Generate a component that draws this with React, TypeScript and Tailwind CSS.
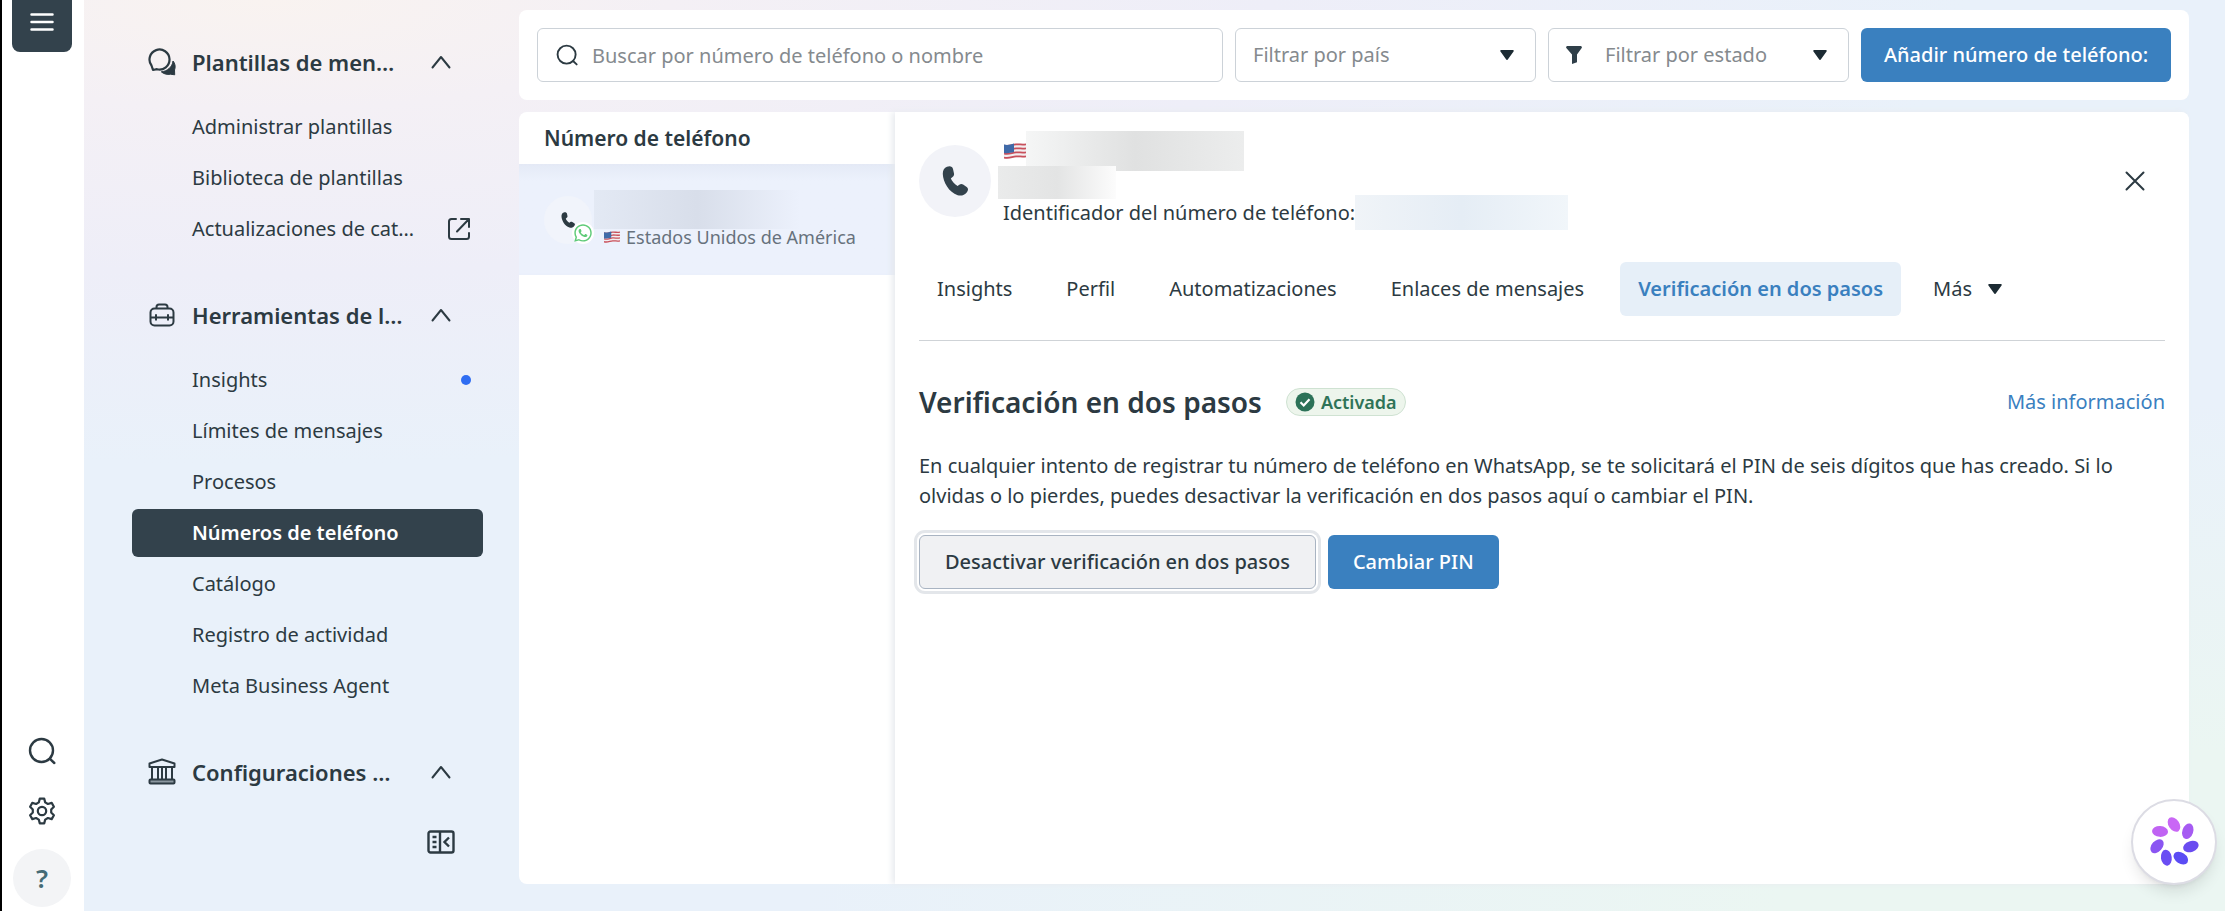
import type { ReactNode } from "react";
import { FaWhatsapp } from "react-icons/fa";

type Item = { label: string; dot?: boolean; external?: boolean; active?: boolean };
type Group = { title: string; icon: ReactNode; items: Item[] };

const GROUPS: Group[] = [
  {
    title: "Plantillas de men…",
    icon: <ChatIcon />,
    items: [
      { label: "Administrar plantillas" },
      { label: "Biblioteca de plantillas" },
      { label: "Actualizaciones de cat…", external: true },
    ],
  },
  {
    title: "Herramientas de l…",
    icon: <ToolboxIcon />,
    items: [
      { label: "Insights", dot: true },
      { label: "Límites de mensajes" },
      { label: "Procesos" },
      { label: "Números de teléfono", active: true },
      { label: "Catálogo" },
      { label: "Registro de actividad" },
      { label: "Meta Business Agent" },
    ],
  },
  { title: "Configuraciones …", icon: <BankIcon />, items: [] },
];

const TABS = ["Insights", "Perfil", "Automatizaciones", "Enlaces de mensajes", "Verificación en dos pasos"];
const ACTIVE_TAB = "Verificación en dos pasos";

function ChatIcon() {
  return (
    <svg viewBox="0 0 28 28" className="size-7" fill="none">
      <path
        d="M3.500 17.500A10 10 0 1 1 9 21.200L5 22z"
        stroke="currentColor"
        strokeWidth="2.200"
        strokeLinejoin="round"
      />
      <path
        d="M25 13c2.200 2.600 2.800 6 1.500 9l.2 4.800-4.200-.6c-3.400.6-6.800-.2-9.200-2.400C19 23.500 24.500 19 25 13z"
        fill="currentColor"
        stroke="currentColor"
        strokeLinejoin="round"
      />
    </svg>
  );
}

function ToolboxIcon() {
  return (
    <svg viewBox="0 0 28 28" className="size-7" fill="none" stroke="currentColor" strokeWidth="2">
      <rect x="2.500" y="7.500" width="23" height="17" rx="4" />
      <path d="M8.500 7.500V6a2.500 2.500 0 0 1 2.500-2.500h6A2.500 2.500 0 0 1 19.500 6v1.500M2.500 16.500h23M8 13.200v6.300M20 13.200v6.300" />
    </svg>
  );
}

function BankIcon() {
  return (
    <svg viewBox="0 0 28 28" className="size-7" fill="none" stroke="currentColor" strokeWidth="2" strokeLinejoin="round">
      <path d="M14 1.500 26.500 5.500V9H1.500V5.500z" />
      <path d="M4 9.500v12M10 9.500v12M14 9.500v12M18 9.500v12M24 9.500v12" />
      <rect x="1.500" y="21.500" width="25" height="4" rx="1" fill="#8b979f" />
    </svg>
  );
}

function SearchIcon({ className }: { className: string }) {
  return (
    <svg viewBox="0 0 28 28" className={className} fill="none" stroke="currentColor" strokeWidth="2.400" strokeLinecap="round">
      <circle cx="13.500" cy="13.500" r="11.500" />
      <path d="m21.700 21.700 4.600 4.300" />
    </svg>
  );
}

function GearIcon() {
  return (
    <svg viewBox="0 0 28 28" className="size-7" fill="none" stroke="currentColor" strokeWidth="2.200" strokeLinejoin="round">
      <path d="M11.800 1.600h4.400l1 3.800 2.700 1.600 3.800-1.100 2.200 3.800-2.700 2.800v3l2.700 2.800-2.200 3.800-3.800-1.100-2.700 1.600-1 3.800h-4.400l-1-3.800L8.100 21l-3.800 1.100-2.200-3.800 2.700-2.800v-3L2.100 9.700l2.200-3.800L8.100 7l2.700-1.600z" />
      <circle cx="14" cy="14" r="4.200" />
    </svg>
  );
}

function PhoneIcon({ className }: { className: string }) {
  return (
    <svg viewBox="0 0 26 30" className={className}>
      <path
        d="M5 .8C8-.4 10.500.6 11 3l1 4.500c.3 1.500-.3 2.800-1.500 3.500l-1.700 1.500c1.500 3.200 3.800 5.800 6.800 7.500l1.700-1.200c1.200-.9 2.600-1 3.800-.2l3.600 2.400c1.700 1.200 1.700 3.400.2 5.200-2.300 2.800-5.500 4-9.200 3C7 26.500 1 16 .8 8 .7 4.500 2.200 1.800 5 .8z"
        fill="currentColor"
      />
    </svg>
  );
}

function ChevronUp() {
  return (
    <svg viewBox="0 0 20 14" className="h-3.5 w-5" fill="none" stroke="currentColor" strokeWidth="2" strokeLinecap="round" strokeLinejoin="round">
      <path d="m1.500 12.500 8.500-10.500 8.500 10.500" />
    </svg>
  );
}

function ExternalIcon() {
  return (
    <svg viewBox="0 0 24 24" className="size-6" fill="none" stroke="currentColor" strokeWidth="2" strokeLinecap="round" strokeLinejoin="round">
      <path d="M9 2H4.500A2.500 2.500 0 0 0 2 4.500v15A2.500 2.500 0 0 0 4.500 22h15a2.500 2.500 0 0 0 2.500-2.500V16M14 2h8v8M22 2 10 14.500" />
    </svg>
  );
}

function CollapseIcon() {
  return (
    <svg viewBox="0 0 28 24" className="h-6 w-7" fill="none" stroke="currentColor" strokeWidth="2.400">
      <rect x="1.500" y="1.500" width="25" height="21" rx="2" />
      <path d="M13 1.500v21" />
      <path d="M5.500 7h4M5.500 12h4M5.500 17h4" />
      <path d="m22 7.500-4.500 4.500 4.500 4.500" />
    </svg>
  );
}

function Caret() {
  return (
    <svg viewBox="0 0 14 10" className="h-2.5 w-3.5 text-[#1c2b33]">
      <path d="M1 0h12a.8.8 0 0 1 .7 1.200L7.800 9.500a1 1 0 0 1-1.600 0L.3 1.200A.8.800 0 0 1 1 0z" fill="currentColor" />
    </svg>
  );
}

function Flag({ className }: { className: string }) {
  return (
    <svg viewBox="0 0 22 16" className={className}>
      <path d="M0 1.500C5 3 8 .5 12 .3s6 .8 10 0v14.200c-4 1-6-.2-10 0S5 17 0 15.500z" fill="#f3eef0" />
      <path
        d="M0 2.500c5 1.500 8-1 12-1.200s6 .8 10 0M0 6.500c5 1.500 8-1 12-1.200s6 .8 10 0M0 10.500c5 1.500 8-1 12-1.200s6 .8 10 0M0 14.500c5 1.500 8-1 12-1.200s6 .8 10 0"
        fill="none"
        stroke="#c8505c"
        strokeWidth="1.800"
      />
      <path d="M0 1.500c4 1.200 7-.3 10-1v8.500c-3 .8-6 1.600-10 1z" fill="#3f6aa8" />
    </svg>
  );
}

const PETALS = [
  { a: 0, c: "#c967f5" },
  { a: 52, c: "#a65bf2" },
  { a: 105, c: "#6a4cf0" },
  { a: 157, c: "#5b4cf4" },
  { a: 206, c: "#6a4df3" },
  { a: 256, c: "#8a55f2" },
  { a: 307, c: "#c063f3" },
];

function Assistant() {
  return (
    <svg viewBox="-28 -28 56 56" className="size-14">
      {PETALS.map((p) => (
        <g key={p.a} transform={`rotate(${p.a})`}>
          <ellipse cx="0" cy="-17.500" rx="5.400" ry="8" fill={p.c} transform="rotate(-34 0 -17.500)" />
        </g>
      ))}
    </svg>
  );
}

function Rail() {
  return (
    <nav className="flex w-[84px] shrink-0 flex-col items-center justify-between border-l-2 border-black bg-white pr-0.5 pb-1 text-[#2c3a42]">
      <button
        type="button"
        aria-label="Menú"
        className="flex h-[52px] w-[60px] items-start justify-center rounded-b-lg bg-[#33424c] pt-3 text-white"
      >
        <svg viewBox="0 0 24 20" className="h-5 w-6" stroke="currentColor" strokeWidth="2.500" strokeLinecap="round">
          <path d="M1.500 2.500h21M1.500 10h21M1.500 17.500h21" />
        </svg>
      </button>
      <div className="flex flex-col items-center">
        <button type="button" aria-label="Buscar" className="mb-8">
          <SearchIcon className="size-7" />
        </button>
        <button type="button" aria-label="Configuración" className="mb-6">
          <GearIcon />
        </button>
        <button
          type="button"
          aria-label="Ayuda"
          className="size-[58px] rounded-full bg-[#f3f4f6] text-[26px] font-semibold text-[#456b75]"
        >
          ?
        </button>
      </div>
    </nav>
  );
}

function Sidebar() {
  return (
    <aside className="flex w-[435px] shrink-0 flex-col pr-9 pl-12 pt-9">
      {GROUPS.map((g) => (
        <section key={g.title} className="mb-9 last-of-type:mb-5">
          <button type="button" className="mb-[15px] flex h-[52px] w-full items-center pr-8 pl-4 text-left last:mb-0">
            {g.icon}
            <span className="ml-4 flex-1 text-[22px] font-semibold">{g.title}</span>
            <ChevronUp />
          </button>
          {g.items.length > 0 && (
            <ul className="flex flex-col gap-[3px]">
              {g.items.map((it) => (
                <li key={it.label}>
                  <a
                    href="#"
                    className={
                      it.active
                        ? "flex h-12 items-center rounded-md bg-[#33424c] pr-3 pl-15 font-semibold text-white"
                        : "flex h-12 items-center pr-3 pl-15"
                    }
                  >
                    <span className="flex-1">{it.label}</span>
                    {it.external && <ExternalIcon />}
                    {it.dot && <span className="size-2.5 rounded-full bg-[#2f6df2]" />}
                  </a>
                </li>
              ))}
            </ul>
          )}
        </section>
      ))}
      <button type="button" aria-label="Contraer menú" className="mt-3 mr-7 self-end">
        <CollapseIcon />
      </button>
    </aside>
  );
}

function Filters() {
  return (
    <div className="flex h-[90px] items-center gap-3 rounded-lg bg-white px-[18px]">
      <label className="flex h-[54px] flex-1 items-center gap-3.5 rounded-md border border-[#ccd2d8] pl-[18px]">
        <SearchIcon className="size-[22px]" />
        <input
          type="search"
          aria-label="Buscar por número de teléfono o nombre"
          placeholder="Buscar por número de teléfono o nombre"
          className="h-full min-w-0 flex-1 outline-none placeholder:text-[#858a8e]"
        />
      </label>
      <div className="relative w-[301px]">
        <select aria-label="Filtrar por país" className="h-[54px] w-full appearance-none rounded-md border border-[#ccd2d8] bg-white pl-[17px] text-[#858a8e]">
          <option>Filtrar por país</option>
        </select>
        <span className="pointer-events-none absolute inset-y-0 right-[22px] flex items-center">
          <Caret />
        </span>
      </div>
      <div className="relative w-[301px]">
        <select aria-label="Filtrar por estado" className="h-[54px] w-full appearance-none rounded-md border border-[#ccd2d8] bg-white pl-14 text-[#858a8e]">
          <option>Filtrar por estado</option>
        </select>
        <span className="pointer-events-none absolute inset-y-0 left-[18px] flex items-center text-[#2f3f49]">
          <svg viewBox="0 0 16 18" className="h-[18px] w-4">
            <path d="M1.500 0h13a1.300 1.300 0 0 1 1.200 2l-4.700 6.500v7.800L6 18V8.500L.3 2A1.300 1.300 0 0 1 1.500 0z" fill="currentColor" />
          </svg>
        </span>
        <span className="pointer-events-none absolute inset-y-0 right-[22px] flex items-center">
          <Caret />
        </span>
      </div>
      <button type="button" className="h-[54px] w-[310px] rounded-md bg-[#3a80bf] font-medium text-white">
        Añadir número de teléfono:
      </button>
    </div>
  );
}

function PhoneList() {
  return (
    <div className="w-[376px] shrink-0">
      <h2 className="flex h-[52px] items-center pl-[25px] text-[21px] font-semibold">Número de teléfono</h2>
      <button
        type="button"
        className="flex h-[111px] w-full bg-[#ecf1fc] bg-linear-to-b from-[#e4eaf6] to-[#ecf1fc] to-15% pl-[25px] text-left shadow-[inset_-6px_0_6px_-4px_#dde4f2]"
      >
        <span className="relative mt-8 flex size-12 items-center justify-center rounded-full bg-[#f1f4fb]">
          <PhoneIcon className="h-4 w-3.5" />
          <span className="absolute -right-0.5 bottom-0 rounded-full bg-white p-px">
            <FaWhatsapp className="size-5 text-[#5fcb78]" />
          </span>
        </span>
        <span className="ml-0.5 flex flex-col pt-[26px]">
          <span className="h-[39px] w-[206px] bg-linear-to-r from-[#e3e9f4] via-[#d8deea] via-50% to-[#ecf1fc]" />
          <span className="flex items-center gap-1.5 pl-2.5 text-[18px] leading-4 text-[#67727d]">
            <Flag className="h-3 w-4" />
            Estados Unidos de América
          </span>
        </span>
      </button>
    </div>
  );
}

function Detail() {
  return (
    <div className="min-w-0 flex-1 rounded-r-lg bg-white px-6 pt-[19px] shadow-[-3px_0_6px_#e8ebef]">
      <header className="flex">
        <div className="mt-3.5 flex size-[72px] shrink-0 items-center justify-center rounded-full bg-[#f2f3f8] text-[#33424c]">
          <PhoneIcon className="h-[30px] w-[26px]" />
        </div>
        <div className="ml-[7px] flex-1">
          <div className="flex h-[35px] pl-1.5">
            <Flag className="mt-3 h-4 w-[22px]" />
            <span className="h-10 w-[218px] bg-linear-to-r from-[#f5f6f6] via-[#e0e1e1] to-[#eceded]" />
          </div>
          <div className="relative h-[33px] w-[118px] bg-linear-to-r from-[#eaebeb] via-[#e3e4e4] to-[#fcfcfc]" />
          <div className="-mt-1 flex items-center pl-[5px]">
            Identificador del número de teléfono:
            <span className="h-[35px] w-[213px] bg-linear-to-r from-[#f0f4f8] via-[#e5edf5] to-[#f1f6fa]" />
          </div>
        </div>
        <button type="button" aria-label="Cerrar" className="mt-[38px] mr-[18px] flex size-6 items-center justify-center self-start">
          <svg viewBox="0 0 20 20" className="size-5" stroke="currentColor" strokeWidth="2" strokeLinecap="round">
            <path d="m1.500 1.500 17 17m0-17-17 17" />
          </svg>
        </button>
      </header>

      <div role="tablist" className="mt-8 flex gap-[18px] border-b border-[#cfd3d7] pb-6">
        {TABS.map((t) => (
          <button
            key={t}
            type="button"
            role="tab"
            aria-selected={t === ACTIVE_TAB}
            className={
              t === ACTIVE_TAB
                ? "h-[54px] rounded-md bg-[#e6eff8] px-[18px] font-semibold text-[#3a80bf]"
                : "h-[54px] px-[18px]"
            }
          >
            {t}
          </button>
        ))}
        <button type="button" className="flex h-[54px] items-center gap-4 px-3.5">
          Más
          <Caret />
        </button>
      </div>

      <div className="mt-10 flex items-center">
        <h1 className="text-[28px] leading-[42px] font-semibold">Verificación en dos pasos</h1>
        <span className="ml-6 flex h-7 items-center gap-1.5 rounded-full border border-[#cfe2d2] bg-[#edf5ec] px-2 text-[18px] font-semibold text-[#2f7358]">
          <svg viewBox="0 0 20 20" className="size-5">
            <circle cx="10" cy="10" r="9.500" fill="#2c7258" />
            <path d="m5.500 10.300 3.200 3.200 5.800-6.300" fill="none" stroke="#fff" strokeWidth="2.200" />
          </svg>
          Activada
        </span>
        <a href="#" className="ml-auto text-[#3a80bf]">
          Más información
        </a>
      </div>
      <p className="mt-7 leading-[30px]">
        En cualquier intento de registrar tu número de teléfono en WhatsApp, se te solicitará el PIN de seis dígitos que
        has creado. Si lo olvidas o lo pierdes, puedes desactivar la verificación en dos pasos aquí o cambiar el PIN.
      </p>
      <div className="mt-6 flex gap-3">
        <button
          type="button"
          className="h-[54px] rounded-md border border-[#a9b4c2] bg-[#f0f1f3] px-[25px] font-medium ring-3 ring-[#e3e6ea] ring-offset-2 ring-offset-white"
        >
          Desactivar verificación en dos pasos
        </button>
        <button type="button" className="h-[54px] rounded-md bg-[#3a80bf] px-[25px] font-medium text-white">
          Cambiar PIN
        </button>
      </div>
    </div>
  );
}

export default function App() {
  return (
    <div className="flex min-h-screen bg-[#e9f1fa] bg-[radial-gradient(ellipse_90%_60%_at_12%_0%,#f9f3f0_0%,#f4f0f5_20%,#eeeef8_50%,transparent_85%),radial-gradient(ellipse_80%_70%_at_100%_100%,#ebf6f2_0%,#ebf6f2_25%,transparent_80%)] font-['Noto_Sans',sans-serif] text-[20px] leading-[30px] text-[#2c3a42]">
      <Rail />
      <Sidebar />
      <main className="flex min-w-0 flex-1 flex-col gap-3 pt-2.5 pr-9 pb-[27px]">
        <Filters />
        <div className="flex flex-1 rounded-lg bg-white">
          <PhoneList />
          <Detail />
        </div>
      </main>
      <button
        type="button"
        aria-label="Asistente"
        className="fixed right-2 bottom-[26px] flex size-[86px] items-center justify-center rounded-full border-2 border-[#dcdce4] bg-white shadow-lg"
      >
        <Assistant />
      </button>
    </div>
  );
}
